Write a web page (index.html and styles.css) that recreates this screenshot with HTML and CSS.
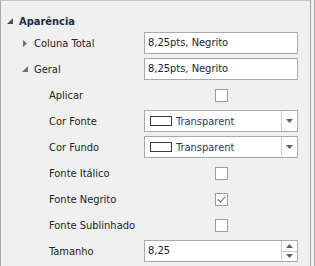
FILE: index.html
```html
<!DOCTYPE html>
<html>
<head>
    <title>Propriedades</title>
    <link rel="stylesheet" href="styles.css">
</head>
<body>
    <div class="frame">
        <div class="panel">
            <!-- Aparência -->
            <div class="category">
                <svg class="tri" width="6" height="6" viewBox="0 0 6 6"><path d="M6 0 L6 6 L0 6 Z" fill="#505050"/></svg>
                <span>Aparência</span>
            </div>

            <div class="row">
                <div class="label level1">
                    <svg class="tri" width="4" height="7" viewBox="0 0 4 7"><path d="M0 0 L4 3.5 L0 7 Z" fill="#707070"/></svg>
                    Coluna Total
                </div>
                <div class="editor"><div class="textbox">8,25pts, Negrito</div></div>
            </div>

            <div class="row">
                <div class="label level1">
                    <svg class="tri" width="6" height="6" viewBox="0 0 6 6"><path d="M6 0 L6 6 L0 6 Z" fill="#707070"/></svg>
                    Geral
                </div>
                <div class="editor"><div class="textbox">8,25pts, Negrito</div></div>
            </div>

            <div class="row">
                <div class="label level2">Aplicar</div>
                <div class="editor center"><div class="check"></div></div>
            </div>

            <div class="row">
                <div class="label level2">Cor Fonte</div>
                <div class="editor">
                    <div class="combo">
                        <div class="combo-value"><span class="swatch"></span><span class="color-name">Transparent</span></div>
                        <div class="combo-btn"><svg width="7" height="4" viewBox="0 0 7 4"><path d="M0 0 L7 0 L3.5 4 Z" fill="#606060"/></svg></div>
                    </div>
                </div>
            </div>

            <div class="row">
                <div class="label level2">Cor Fundo</div>
                <div class="editor">
                    <div class="combo">
                        <div class="combo-value"><span class="swatch"></span><span class="color-name">Transparent</span></div>
                        <div class="combo-btn"><svg width="7" height="4" viewBox="0 0 7 4"><path d="M0 0 L7 0 L3.5 4 Z" fill="#606060"/></svg></div>
                    </div>
                </div>
            </div>

            <div class="row">
                <div class="label level2">Fonte Itálico</div>
                <div class="editor center"><div class="check"></div></div>
            </div>

            <div class="row">
                <div class="label level2">Fonte Negrito</div>
                <div class="editor center">
                    <div class="check">
                        <svg width="11" height="11" viewBox="0 0 11 11"><path d="M2 5.5 L4.5 8 L9.5 2.5" fill="none" stroke="#6a6a6a" stroke-width="1.1"/></svg>
                    </div>
                </div>
            </div>

            <div class="row">
                <div class="label level2">Fonte Sublinhado</div>
                <div class="editor center"><div class="check"></div></div>
            </div>

            <div class="row">
                <div class="label level2">Tamanho</div>
                <div class="editor">
                    <div class="spin">
                        <div class="spin-value">8,25</div>
                        <div class="spin-btns">
                            <div class="spin-btn"><svg width="7" height="4" viewBox="0 0 7 4"><path d="M0 4 L7 4 L3.5 0 Z" fill="#606060"/></svg></div>
                            <div class="spin-btn"><svg width="7" height="4" viewBox="0 0 7 4"><path d="M0 0 L7 0 L3.5 4 Z" fill="#606060"/></svg></div>
                        </div>
                    </div>
                </div>
            </div>
        </div>
        <div class="outer-edge"></div>
    </div>
</body>
</html>
```

FILE: styles.css
```css
body {
    margin: 0;
    font-family: "DejaVu Sans Condensed", "Liberation Sans", sans-serif;
    font-size: 11px;
    color: #222;
    background: #f0f0f0;
}

.frame {
    display: flex;
    width: 315px;
    height: 266px;
    overflow: hidden;
}

.panel {
    width: 309px;
    height: 266px;
    border-left: 1px solid #a8a8a8;
    border-top: 1px solid #c4c4c4;
    border-right: 1px solid #a0a0a0;
    background: #f0f0f0;
}

.outer-edge {
    margin-left: 3px;
    width: 1px;
    background: #a8a8a8;
}

/* Category header */
.category {
    height: 29px;
    display: flex;
    align-items: center;
    padding-top: 11px;
    box-sizing: border-box;
    font-weight: bold;
    color: #1c2b4a;
}

.category .tri {
    margin-left: 6px;
    margin-right: 6px;
}

/* Property rows */
.row {
    height: 26px;
    display: flex;
    align-items: center;
}

.label {
    width: 143px;
    box-sizing: border-box;
    display: flex;
    align-items: center;
}

.level1 {
    padding-left: 21px;
}

.level1 .tri {
    width: 6px;
    margin-right: 6px;
}

.level2 {
    padding-left: 48px;
}

.editor {
    width: 154px;
    height: 22px;
    display: flex;
    align-items: center;
}

.editor.center {
    justify-content: center;
}

.textbox {
    width: 100%;
    height: 22px;
    box-sizing: border-box;
    border: 1px solid #a9a9a9;
    background: #fff;
    padding-left: 3px;
    line-height: 20px;
    color: #1b1b2b;
}

/* Checkbox */
.check {
    width: 13px;
    height: 13px;
    box-sizing: border-box;
    border: 1px solid #9c9c9c;
    background: #fff;
    display: flex;
    align-items: center;
    justify-content: center;
}

/* Color combo */
.combo {
    width: 100%;
    height: 22px;
    box-sizing: border-box;
    border: 1px solid #a9a9a9;
    background: #fff;
    display: flex;
}

.combo-value {
    flex: 1;
    display: flex;
    align-items: center;
    padding-left: 5px;
}

.swatch {
    width: 22px;
    height: 10px;
    box-sizing: border-box;
    border: 1px solid #3a3a3a;
    background: #fff;
    margin-right: 4px;
}

.color-name {
    color: #2e3864;
}

.combo-btn {
    width: 15px;
    border-left: 1px solid #d0d0d0;
    display: flex;
    align-items: center;
    justify-content: center;
}

/* Spin edit */
.spin {
    width: 100%;
    height: 22px;
    box-sizing: border-box;
    border: 1px solid #a9a9a9;
    background: #fff;
    display: flex;
}

.spin-value {
    flex: 1;
    padding-left: 3px;
    line-height: 20px;
    color: #1b1b2b;
}

.spin-btns {
    width: 15px;
    border-left: 1px solid #d0d0d0;
    display: flex;
    flex-direction: column;
}

.spin-btn {
    flex: 1;
    display: flex;
    align-items: center;
    justify-content: center;
}

.spin-btn + .spin-btn {
    border-top: 1px solid #c8c8c8;
}
```
